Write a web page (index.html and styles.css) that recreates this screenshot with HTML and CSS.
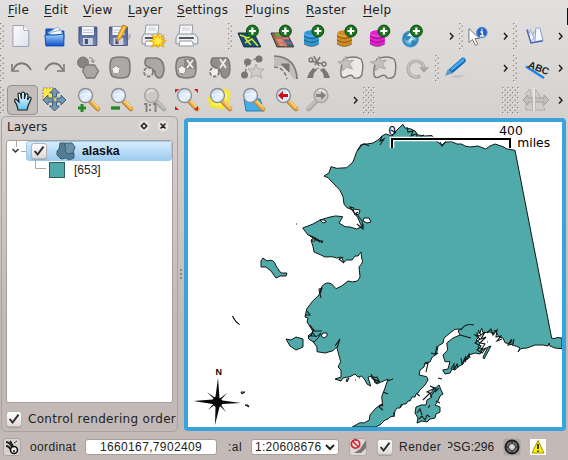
FILE: index.html
```html
<!DOCTYPE html>
<html lang="en">
<head>
<meta charset="utf-8">
<title>Map viewer</title>
<link rel="stylesheet" href="styles.css">
</head>
<body>
<svg class="defs" width="0" height="0">
  <defs>
    <linearGradient id="blue" x2="0" y2="1"><stop stop-color="#a5d3fb"/><stop offset="1" stop-color="#0b50c8"/></linearGradient>
    <linearGradient id="page" x2="1" y2="1"><stop stop-color="#fff"/><stop offset="1" stop-color="#dde1ee"/></linearGradient>
    <linearGradient id="disk" x2="0" y2="1"><stop stop-color="#4d5d92"/><stop offset="1" stop-color="#7786b0"/></linearGradient>
    <linearGradient id="lens" x2="1" y2="1"><stop stop-color="#b5d0ee"/><stop offset=".6" stop-color="#e9f3fd"/><stop offset="1" stop-color="#c4dbf2"/></linearGradient>
    <linearGradient id="hand" x2="0" y2="1"><stop stop-color="#fff"/><stop offset="1" stop-color="#62c6f2"/></linearGradient>
    <radialGradient id="globe"><stop stop-color="#eafaff"/><stop offset=".5" stop-color="#6cc2ea"/><stop offset="1" stop-color="#1673b5"/></radialGradient>
    <pattern id="dots" width="5" height="5" patternUnits="userSpaceOnUse"><rect width="1.3" height="1.3" fill="#8b8784"/><rect x="2.5" y="2.5" width="1.3" height="1.3" fill="#8b8784"/><rect x="1" y="1" width="1" height="1" fill="#f3f1f0"/></pattern>
    <symbol id="plus" viewBox="0 0 14 14"><circle cx="7" cy="7" r="6" fill="#1c7420" stroke="#0e4a12"/><path d="M7 3.500v7M3.500 7h7" stroke="#fff" stroke-width="2.200"/></symbol>
    <symbol id="mag" viewBox="0 0 33 32"><path d="M19.500 17.500l7.500 7.500" stroke="#b98a45" stroke-width="4.600" stroke-linecap="round"/><path d="M20.500 17.500l6.800 6.800" stroke="#f6b645" stroke-width="3.200" stroke-linecap="round"/><path d="M21 17l6 5.800" stroke="#fff0c0"/><circle cx="14.500" cy="11.500" r="7" fill="url(#lens)" stroke="#8c8f91" stroke-width="1.400"/><path d="M9 12q5-4 11-1" fill="none" stroke="#fff" opacity=".8"/></symbol>
    <symbol id="magoff" viewBox="0 0 33 32"><path d="M19.500 17.500l7.500 7.500" stroke="#a9a6a4" stroke-width="4.600" stroke-linecap="round"/><path d="M20.500 17.500l6.500 6.500" stroke="#c1bebc" stroke-width="3" stroke-linecap="round"/><circle cx="14.500" cy="11.500" r="7" fill="#cbc8c6" stroke="#a5a3a1" stroke-width="1.400"/><path d="M10 9q3-4 7-2" fill="none" stroke="#e7e5e3" stroke-width="2"/></symbol>
    <symbol id="printer" viewBox="0 0 33 32"><path d="M10 5h13l-1 10H9z" fill="#f6f7f9" stroke="#9599a2"/><path d="M12 8h8M12 10h8" stroke="#c9ccd3"/><path d="M8 14h17l3 4v6H6v-6z" fill="#ecedf0" stroke="#8d919a"/><path d="M9 18h15" stroke="#55585f" stroke-width="2.200"/><path d="M10 21h12l2 5H9z" fill="#fff" stroke="#9599a2"/></symbol>
    <symbol id="db" viewBox="0 0 33 32"><path d="M6 13v11q7.500 5 15 0V13" fill="currentColor"/><ellipse cx="13.500" cy="13" rx="7.500" ry="3" fill="currentColor" stroke="#fff" stroke-opacity=".3"/><path d="M6 16q7.500 5 15 0M6 20q7.500 5 15 0M6 24q7.500 5 15 0" fill="none" stroke="#000" stroke-opacity=".4" stroke-width="1"/><use href="#plus" x="13" y="4" width="14" height="14"/></symbol>
    <symbol id="floppy" viewBox="0 0 33 32"><path d="M8 7h18v18.500H10L8 23z" fill="url(#disk)" stroke="#46537c"/><path d="M11 7h12v8H11z" fill="#f5f7fa"/><path d="M12 10h10M12 12.500h10" stroke="#bbc4d5"/><path d="M12 18h10v7H12z" fill="#ccd2df"/><path d="M14 19h3v5h-3z" fill="#3f4c78"/></symbol>
    <symbol id="chev" viewBox="0 0 8 32"><path d="M2 13l3 3.300-3 3.200" fill="none" stroke="#222" stroke-width="1.500"/></symbol>
    <symbol id="tick" viewBox="0 0 16 16"><path d="M3 8l3.400 4 6.800-9" fill="none" stroke="#2c2c2c" stroke-width="2.200"/></symbol>
  </defs>
</svg>

<div class="window">
  <nav class="menu">
    <span class="m1"><u>F</u>ile</span><span class="m2"><u>E</u>dit</span><span class="m3"><u>V</u>iew</span><span class="m4"><u>L</u>ayer</span><span class="m5"><u>S</u>ettings</span><span class="m6"><u>P</u>lugins</span><span class="m7"><u>R</u>aster</span><span class="m8"><u>H</u>elp</span>
  </nav>

  <div class="toolbar files">
    <svg class="grip"><rect width="5" height="27" fill="url(#dots)"/></svg>
    <svg class="tool" viewBox="0 0 33 32"><path d="M8 5.500h11l5 5.500v15.500H8z" fill="url(#page)" stroke="#9c9ead"/><path d="M18.500 5.500l.5 5h5" fill="#fff" stroke="#a8abb8"/></svg>
    <svg class="tool" viewBox="0 0 33 32"><path d="M8 9h8l2 2h8v8H8z" fill="#1c5fc8" stroke="#0d4aa8"/><path d="M10 13l10-6 5 7z" fill="#fff" stroke="#8eabcf"/><path d="M14 12l9-2 2 5H11z" fill="#eef6ff" stroke="#8eabcf"/><path d="M7 15l10 0 9-1v12H8z" fill="url(#blue)" stroke="#0c4cba"/></svg>
    <svg class="tool" viewBox="0 0 33 32"><use href="#floppy" width="33" height="32"/></svg>
    <svg class="tool" viewBox="0 0 33 32"><path d="M22 15l6-1v4l-6 5z" fill="#b9b8bc"/><use href="#floppy" x="-1.500" width="33" height="32"/><path d="M20 5l4 1.500-6 12-4 3 .5-5z" fill="#ffb52e" stroke="#c58227"/><path d="M21.500 7l-5 10" stroke="#ffe48a"/></svg>
    <svg class="tool" viewBox="0 0 33 32"><use href="#printer" width="33" height="32"/><path d="M22 13.500l1.600 4.200 4-2.200-2 4.200 4 1.300-4 1.500 2 4.200-4-2.200-1.600 3-1.600-3-4.200 2.200 2-4.200-4.200-1.500 4.200-1.500-2-4 4.200 2z" fill="#ffeb43" stroke="#efad00" stroke-width="1.200"/></svg>
    <svg class="tool" viewBox="0 0 33 32"><use href="#printer" x="1" width="33" height="32"/></svg>
    <svg class="grip g-add"><rect width="5" height="27" fill="url(#dots)"/></svg>
    <svg class="tool" viewBox="0 0 33 32"><path d="M5 13h16l7 14H11z" fill="#164e78" stroke="#172c3c"/><path d="M7 15l8 3 5-3M12 23l7-4 6 7M12 18l6 7" fill="none" stroke="#dbe82b" stroke-width="1.500"/><use href="#plus" x="12.500" y="4" width="14" height="14"/></svg>
    <svg class="tool" viewBox="0 0 33 32"><path d="M5 13h16l7 14H11z" fill="#a15e47" stroke="#3b342d"/><path d="M8 13h5l3 5h-5z" fill="#68a044"/><path d="M15 14h5l3 5h-5z" fill="#e7a0a0"/><path d="M10 19h7l4 7h-7z" fill="#c29a77"/><path d="M18 20h6l3 6h-5z" fill="#26718b"/><path d="M9 18h15M13 13l7 14M11 23h16" stroke="#e35a75"/><use href="#plus" x="12.500" y="4" width="14" height="14"/></svg>
    <svg class="tool sky" viewBox="0 0 33 32"><use href="#db" width="33" height="32"/></svg>
    <svg class="tool ochre" viewBox="0 0 33 32"><use href="#db" width="33" height="32"/></svg>
    <svg class="tool pink" viewBox="0 0 33 32"><use href="#db" width="33" height="32"/></svg>
    <svg class="tool" viewBox="0 0 33 32"><circle cx="13.500" cy="19" r="8.300" fill="url(#globe)" stroke="#75aed0" stroke-width=".6"/><path d="M7 13l6 1 1 4-4 3-3-3zM15 20l5 1-2 5-4-1z" fill="#3a83b5"/><path d="M10 16l4-4 1 4z" fill="#fff"/><use href="#plus" x="12.500" y="4" width="14" height="14"/></svg>
    <svg class="chev c-add"><use href="#chev"/></svg>
    <svg class="grip g-near"><rect width="5" height="27" fill="url(#dots)"/></svg>
    <svg class="tool" viewBox="0 0 33 32"><circle cx="19" cy="12.500" r="5.300" fill="#2563bd" stroke="#5790d7"/><path d="M19 9v1.500M17.500 12h2v4M17 16h4.500" stroke="#fff" stroke-width="1.400" fill="none"/><path d="M6 8.500v14l3.500-3 3 6 2.500-1.200-3-5.800h4.500z" fill="#fff" stroke="#777"/></svg>
    <svg class="chev c-id"><use href="#chev"/></svg>
    <svg class="grip g-near"><rect width="5" height="27" fill="url(#dots)"/></svg>
    <svg class="tool" viewBox="0 0 33 32"><path d="M9 9l4 14 12-2-3-12-4 1-4 6z" fill="#dce7fa" stroke="#8398cf"/><path d="M12 9l4 9-3 4M18 8l4 0 3 12-8 2z" fill="#f7fbff" stroke="#8fa1d6"/><path d="M9 10l4 13 12-2" fill="none" stroke="#4c66b4" stroke-width="1.300"/></svg>
    <svg class="chev c-end"><use href="#chev"/></svg>
  </div>

  <div class="toolbar edits">
    <svg class="grip"><rect width="5" height="27" fill="url(#dots)"/></svg>
    <svg class="tool gray" viewBox="0 0 33 32"><path d="M26 18C21 9 12 9 8 18" fill="none" stroke-width="1.800"/><path d="M7 12v7h7" fill="none" stroke-width="1.600"/></svg>
    <svg class="tool gray" viewBox="0 0 33 32"><path d="M7 18C12 9 20 9 25 18" fill="none" stroke-width="1.800"/><path d="M26 12v7h-7" fill="none" stroke-width="1.600"/></svg>
    <svg class="tool gray" viewBox="0 0 33 32"><circle cx="12" cy="10.500" r="5.500" fill="#878583"/><path d="M14.500 13h9l4 6-4 7h-8l-4-7z" fill="#aaa7a5" stroke-width="1.300"/><path d="M18 6q4-1 4 4m-2-1.500l2 2 2-2" fill="none"/></svg>
    <svg class="tool gray" viewBox="0 0 33 32"><path d="M9 6q7-2 14 0 3 1 3 9 0 9-3 10-7 2-13 0-4-1-4-10 0-8 3-9z" fill="#aba8a6" stroke-width="1.600"/><circle cx="12" cy="18" r="3.800" fill="#f1f0ef" stroke-dasharray="3 1.500"/></svg>
    <svg class="tool gray" viewBox="0 0 33 32"><path d="M10 6h10q7 2 7 12-1 8-5 8-4-1-4-6-1-3-5-4-5-2-5-5 0-4 2-5z" fill="#aba8a6" stroke-width="1.600"/><circle cx="11.500" cy="20" r="4.500" fill="#dedbd9" stroke-width="1.800" stroke-dasharray="3.500 1.500"/></svg>
    <svg class="tool gray" viewBox="0 0 33 32"><path d="M9 6q7-2 14 0 3 1 3 9 0 9-3 10-7 2-13 0-4-1-4-10 0-8 3-9z" fill="#aba8a6" stroke-width="1.600"/><path d="M14 7h11v10H14z" fill="#898684" stroke="none"/><circle cx="12" cy="18" r="3.800" fill="#f1f0ef" stroke-dasharray="3 1.500"/><path class="white" d="M17 8l6 8m0-8l-6 8"/></svg>
    <svg class="tool gray" viewBox="0 0 33 32"><path d="M10 6h14q3 2 3 12-1 8-5 8-4-1-4-6-1-3-5-4-5-2-5-5 0-4 2-5z" fill="#918e8c" stroke-width="1.500"/><circle cx="11.500" cy="20" r="4.500" fill="#f0eeed" stroke-width="1.800" stroke-dasharray="3.500 1.500"/><path class="white" d="M17 7l6 9m0-9l-6 9"/></svg>
    <svg class="tool gray" viewBox="0 0 33 32"><path d="M11 10l11-4M11 10L9 23" stroke-width="1.300" stroke-dasharray="5 2"/><circle cx="11.500" cy="10" r="3.500" fill="#777" stroke="none"/><circle cx="23" cy="7" r="3.500" fill="#777" stroke="none"/><circle cx="8.500" cy="23" r="3.500" fill="#777" stroke="none"/><path d="M20 12l2 5 6 0-4 4 2 5-6-3-5 3 1-5-4-4h6z" fill="#cfccca" stroke="#aeaba9"/></svg>
    <svg class="tool gray" viewBox="0 0 33 32"><path d="M5 4q23 0 24 23h-5l-5-8-7-5H5z" fill="#c1bebc" stroke="none"/><path d="M5 4q22 1 23 23" fill="none" stroke-width="1.600"/><path d="M5 15q10 0 13 12" fill="none" stroke-width="1.600" stroke-dasharray="4 2"/><path d="M12 12h8v8z" fill="#777"/></svg>
    <svg class="tool gray" viewBox="0 0 33 32"><path d="M9 22q7-11 15 0" fill="none" stroke-dasharray="4 2"/><path d="M12 4l5 10M18 5l-5 8M9 9l12 3" fill="none" stroke-width="1.600"/><circle cx="9" cy="8" r="2" fill="none" stroke-width="1.400"/><circle cx="22" cy="12" r="2" fill="none" stroke-width="1.400"/><path d="M11 16l4 2-3 3-1 5H5l2-5zM22 16l-4 2 3 3 1 5h6l-2-5z" fill="#777" stroke="none"/></svg>
    <svg class="tool gray" viewBox="0 0 33 32"><path d="M9 7q10-4 17 0 3 5 1 15-1 5-8 4-2-5-8-1-4 2-5-2-1-8 3-16z" fill="#eceae9" stroke-width="1.400"/><path d="M11 4l1.500 5 6-1-4 4 3 5-6-2-4 4v-6l-5-3 6-1z" fill="#c3c0be" stroke="#aaa7a5"/></svg>
    <svg class="tool gray" viewBox="0 0 33 32"><path d="M9 7q10-4 17 0 3 5 1 15-1 5-8 4-2-5-8-1-4 2-5-2-1-8 3-16z" fill="#dedbd9" stroke-width="1.400"/><path d="M11 4l1.500 5 6-1-4 4 3 5-6-2-4 4v-6l-5-3 6-1z" fill="#c3c0be" stroke="#aaa7a5"/></svg>
    <svg class="tool" viewBox="0 0 33 32"><path d="M19 24a8 8 0 1 1 4-8" fill="none" stroke="#a9a6a4" stroke-width="3.200"/><path d="M18 15h10l-5 6z" fill="#a9a6a4"/><path d="M17 24.500a8 8 0 1 1 6-9" fill="none" stroke="#cbc8c6" stroke-width="1.400"/></svg>
    <svg class="grip g-pen"><rect width="5" height="27" fill="url(#dots)"/></svg>
    <svg class="tool" viewBox="0 0 33 32"><path d="M10 24l16-1-8 3z" fill="#c1bebc"/><path d="M11.500 18.500L23 8.500" stroke="#126cb5" stroke-width="5.500" stroke-linecap="round"/><path d="M12 17L23 8" stroke="#48a9eb" stroke-width="2.800" stroke-linecap="round"/><path d="M8 17l5 4-8 3z" fill="#5d9cc9"/></svg>
    <svg class="chev c-pen"><use href="#chev"/></svg>
    <svg class="grip g-near"><rect width="5" height="27" fill="url(#dots)"/></svg>
    <svg class="tool" viewBox="0 0 33 32"><path d="M7 14.500L25 26" stroke="#1682ee" stroke-width="2.200"/><text class="abc" x="8.500" y="15" transform="rotate(22 8 15)">ABC</text></svg>
    <svg class="chev c-end"><use href="#chev"/></svg>
  </div>

  <div class="toolbar views">
    <svg class="grip"><rect width="5" height="27" fill="url(#dots)"/></svg>
    <span class="pressed"><svg width="30" height="30" viewBox="0 0 30 30"><path d="M10 24q-1-6-3-8-1-3 1-3l3 3-1-8q1-2 2.500 0l1 5V7q1.500-2 3 0v6l1-5q2-1 2.500 1l-.5 5 2-3q2 0 1.500 2l-3 7-1 4z" fill="url(#hand)" stroke="#17222c" stroke-width="1.200"/></svg></span>
    <svg class="tool" viewBox="0 0 33 32"><path d="M5 4h12v12H5z" fill="#ffe94a" stroke="#7b702a" stroke-dasharray="1.500 1.500"/><path d="M16.500 4l5 5h-3v4h-4V9h-3zM16.500 27l5-5h-3v-4h-4v4h-3zM5 16l5-5v3h5v4h-5v3zM28 16l-5-5v3h-4v4h4v3z" fill="#7897ae" stroke="#40627a"/></svg>
    <svg class="tool" viewBox="0 0 33 32"><use href="#mag" width="33" height="32"/><path d="M11 20v8M7 24h8" stroke="#238b26" stroke-width="3"/></svg>
    <svg class="tool" viewBox="0 0 33 32"><use href="#mag" width="33" height="32"/><path d="M7 24h9" stroke="#238b26" stroke-width="3.400"/></svg>
    <svg class="tool" viewBox="0 0 33 32"><use href="#magoff" width="33" height="32"/><path d="M7 20h2.500v8M16 20h2.500v8M13 20v2m0 3v2" stroke="#858381" stroke-width="2" fill="none"/></svg>
    <svg class="tool" viewBox="0 0 33 32"><use href="#mag" width="33" height="32"/><path d="M5 5h4l-4 4zM28 5h-4l4 4zM5 26h4l-4-4zM28 26h-4l4-4z" fill="#d51822"/></svg>
    <svg class="tool" viewBox="0 0 33 32"><path d="M12 9l10-3 4 3-1 10-6 5-11-2-2-8z" fill="#fff45a" stroke="#f2e53d" stroke-width="3"/><use href="#mag" width="33" height="32"/></svg>
    <svg class="tool" viewBox="0 0 33 32"><path d="M8 15h16l4 12H10z" fill="#42aee9" stroke="#2880b7"/><use href="#mag" width="33" height="32"/></svg>
    <svg class="tool" viewBox="0 0 33 32"><use href="#mag" width="33" height="32"/><path d="M9 11.500l5-4.500v3h5v3h-5v3z" fill="#d20b16"/></svg>
    <svg class="tool" viewBox="0 0 33 32"><g transform="translate(33.500 0) scale(-1 1)"><use href="#magoff" width="33" height="32"/></g><path d="M24 11.500L19 7v3h-5v3h5v3z" fill="#858381"/></svg>
    <svg class="chev c-view"><use href="#chev"/></svg>
    <svg class="grip wide"><rect width="12" height="27" fill="url(#dots)"/></svg>
    <svg class="grip wider"><rect width="17" height="27" fill="url(#dots)"/></svg>
    <svg class="tool" viewBox="0 0 33 32"><path d="M7 26V9l4-4 3 21zM16 26V5l4 5 6 16z" fill="#d0cdcb" stroke="#b0adab"/><path d="M4 16l5-5v3h16v-3l5 5-5 5v-3H9v3z" fill="#c3c0be" stroke="#a3a09e"/><path d="M15 4v23" stroke="#e6e4e2" stroke-width="2"/></svg>
    <svg class="chev c-end"><use href="#chev"/></svg>
  </div>

  <main class="work">
    <section class="dock">
      <header class="dock-head"><span class="dock-title">Layers</span>
        <svg width="44" height="14" viewBox="0 0 44 14"><circle cx="13" cy="6" r="5.500" fill="#e6e3e1"/><circle cx="32" cy="6" r="5.500" fill="#e6e3e1"/><path d="M13 3.200L15.800 6 13 8.800 10.200 6zM29.500 3.500l5 5m0-5l-5 5" fill="none" stroke="#222" stroke-width="1.500"/></svg>
      </header>
      <div class="tree">
        <div class="row">
          <svg class="branch" width="19" height="21"><path d="M9.500 0v6M14 10.500h6" stroke="#aaa"/><path d="M5.500 8l3 3 3-3" fill="none" stroke="#333" stroke-width="1.500"/></svg>
          <div class="selected"><svg class="box" viewBox="0 0 16 16"><use href="#tick"/></svg>
            <svg class="layer-icon" width="20" height="19" viewBox="0 0 20 19"><path d="M4 1h6l3 3v6l5 1v5l-5 2-3-2-5 1-4-4V9l2-2z" fill="#547b94" stroke="#395e77"/><path d="M11 1l5 0 3 4-2 6-5 1-3-3 1-3-2-3z" fill="#6b92aa" stroke="#395e77"/></svg>
            <b>alaska</b></div>
        </div>
        <div class="row child"><svg width="12" height="20"><path d="M.5 0v8.500H11" fill="none" stroke="#aaa"/></svg><i class="swatch"></i><span>[653]</span></div>
      </div>
      <div class="order"><svg class="box" viewBox="0 0 16 16"><use href="#tick"/></svg><span>Control rendering order</span></div>
    </section>
    <div class="splitter"><i></i><i></i><i></i></div>
    <section class="map">
      <svg width="374" height="305" viewBox="188 122 374 305">
        <g class="land">
          <path d="M515 150.300L551.700 338.300 555 338.500 557 337.500 562 338V348.700L555 348 550 346 549 343 548 346 543 345 535 345 527 348 521 348.500 518 352 520 348 516 346 512 345 511.700 339 510 344 505 342.700 503 338 499 337 495 330 493 334 490 332 483 332.700 481.700 328.300 480 333 476.700 333 479 337 476 340 480 343 478 347 483 349 480 354 475 353 469 355 468 359 465 360 463 364 458 366.700 455 370 452 369 450 373 445 374 442.700 370 448 369 450 361.700 445 361.700 443 355 447.700 350 446.700 343 453 338 460 335 458 331 461 329 455 329.300 450 333 444 338 443 343 438 346 436.700 353 431.700 358 430 362 425 362.700 424 367 420 370 419 375 426.700 376.700 428 380 425 385 420 390 418 393 416 394 415 397 412 397 410 401 408 401 406 404 403 404 400 408 397 408 395 411 394 416 390 417 388 419 385 420 383 422 380 425 375 427H352.300L360 422.700 364 423 369.300 420 370 415 375 409 380 405 382.700 406 381.700 396.700 385 388 388 379 376.700 384 374 380 380 381.700 375 383 373 376 368 377 370.700 386 367 384 365 380 361.700 376 358 377 355 374 350 376.700 343 378 341 381 335 379 341 377 341 370 338 367 340.700 361.700 338 351.700 336.700 347 333 350.700 325 353 317 351.700 317 347 313 341.700 308 336 313 331.700 309 325 307 322 308 318 305 317 306.700 309 313 300.700 319 295 321.700 286.700Q326 281 331.700 284L336 288.700 341.700 286 348 281Q358 284 360 276.700L359 266.700Q364 263 361.700 258L361 252 358 256 355 256 352 260 346.700 260 344 262 341 257 336.700 258 332 256.700 325 257 321 255 314 252 313 246.700 311 240 315 238 323 242.700 313 236.700 308 235 302.700 228 313 224 320 220 330 217Q335 215 342.700 216.700L339 223 345 226.700 350 227 356.700 229 361.700 226.700 358 218 352.700 210 346.700 207.500 344 204 343 196.700Q341 190 335 185L328 177.700 324 176 329 173 331 166.700 336.700 168.300 346.700 167.700 353 162 356.700 151.700 362.700 144 367 144 373 143 378 140 382 136 386 134 392 136 397 130 403 124.300 405 128 411 129 415 131 418 135 425 136 432 135.500 435 140 441.700 145 446 142 451.700 141.700 457 144 461.700 144 465 146 470 147 478 146 485.700 149 490 146 495 144 503 146.700 507 149z"/>
          <path d="M261 261l2-3 4 3q7-3 9 5l5 7 6 0-1 3-6 0-4 2-5-7-5-4-5 0zM286 339l5 1 5-3 7 2v8l-7 3-6-4-4-7zM308 338l5-5 3 4 5-4-2 4-5 5-4-2zM232.500 316l2 4 5 4.500-3-2zM241 392h4l-3 2zM245 405l3 0 1 2z"/>
          <path d="M439 385l-5 4-4 5 2 3-5 3-1 5-5 0-5 2-1 6 3 5-1 5 5-2 5 1 3-3 5-1 1-4 4-2 0-5-5-2 3-4 2-5 3-2-2-4z"/>
          <path d="M488 347l3-1-7 13-1-2zM346 380l3-2-2 4z"/>
        </g>
        <g class="water">
          <path d="M364 218l5 0 2 4-4 1-4-2zM353 209l7 1-1 4-4 1zM320 220l5 0 1 2-3 1zM312 239l3 0 0 2-3 0zM323 333l4 0 0 3-3 2-3-2z"/>
          <path d="M356 213l6 8 1 6" fill="none"/>
        </g>
        <g class="crags">
          <path d="M382 136l-2 5 4-2-4 6M407 127l1 5 5-1-2 5 5-2 2 4 6-3M391 130l5 3M440 142l2 4 4-5M357 151l4-6 4-1 4 2M461 330q4-7 13-5M460 335l11 3M310 325l4 6 8 0M314 329l-3 7 5 0M320 294l2-6-3 1 2 9M305 315l5 0-3-4M337 348l3-9-5 7M310 236l10 6M343 257l-4 2 5 4M322 240l0 3M354 208l-4-1 5 7 3-2M357 224l6 5 0-5M371 378l6-1 2 4-6-2-2-5M387 381l6-2M383 392l5 2M382 404l-3 3 4 3M437 346l-2 9 3-2M431 353l4 1M425 364l3-1-2 9"/>
          <path d="M478 330l3 5 4-3-4 7 5-2-6 6 5 1-4 6 5-2-4 5-5-3 4-4-6-3 5-4-5-4 6 1M487 333l4-4 2 6 4-5-1 7 5-1-4 5 5-2M511 340l-3 5 5-1 1-5M417 413l3-4 2 6M428 408l2-3M423 400l7-7-3-1 8-4-5-2 6 3-6 8M435 392l4-4M419 419l3-3 3 4 2-5 3 2M436 401l4 2M420 396l-3-2M402 404l-2 3M394 412l0 5M461 358l1 6 4-8-1 6 4-8 1 4M451 369l3-5 0 6 3-6 1 4M487 342h1M426 370h1M438 378l4 1M296 224h1M355 380h1M359 378h1"/>
        </g>
        <g class="scale"><path class="halo" d="M392 148v-9h118v9"/><path d="M392 148v-9h118v9"/><text x="388.200" y="134.800">0</text><text x="499.300" y="134.800">400</text><text x="517.300" y="146.800">miles</text></g>
        <g class="compass"><path d="M218 378l1.500 20 3 2.500 18.500 2.500-18.500 1-3 3L215 425l.5-18-3-3-19-3 19-1.500 3-3z"/><path d="M207 392l9 9-8 9 9-7 9 9-7-10 8-9-9 7z"/><circle cx="217" cy="402" r="3.300"/><text x="215.500" y="375">N</text></g>
      </svg>
    </section>
  </main>

  <footer class="status">
    <svg class="mouse" width="18" height="18" viewBox="0 0 18 18"><rect x=".5" y=".5" width="17" height="17" rx="3" fill="#d9d4d2" stroke="#aaa29f"/><path d="M3 4q4 0 7 7M3 8q3 0 5 4M7 3l3 5" fill="none" stroke="#222" stroke-width="1.800"/><path d="M11 5l3-2" stroke="#333"/><circle cx="11" cy="12" r="3.500" fill="#eee" stroke="#111" stroke-width="1.600"/><circle cx="11" cy="13" r="1" fill="#111"/></svg>
    <span class="coord">oordinat</span>
    <span class="field">1660167,7902409</span>
    <span class="cal">:al</span>
    <span class="field combo">1:20608676<svg width="10" height="8"><path d="M1 2l4 4 4-4" fill="none" stroke="#222" stroke-width="2"/></svg></span>
    <svg class="stop" width="18" height="18" viewBox="0 0 18 18"><rect x=".5" y=".5" width="17" height="17" rx="3" fill="#ddd8d6" stroke="#b1aaa7"/><path d="M17 2l-6 9-6 4 7 0 5-5z" fill="#777"/><circle cx="6.500" cy="6" r="4.200" fill="#f5dddd" stroke="#ce272e" stroke-width="1.700"/><path d="M3.500 3l6 6" stroke="#ce272e" stroke-width="1.600"/></svg>
    <svg class="box" viewBox="0 0 16 16"><use href="#tick"/></svg>
    <span class="render">Render</span>
    <span class="epsg"><span>PSG:296</span></span>
    <svg class="crs" width="18" height="18" viewBox="0 0 18 18"><rect x=".5" y=".5" width="17" height="17" rx="3" fill="#aaa5a2"/><circle cx="9" cy="9" r="6.500" fill="#777" stroke="#222" stroke-width="2"/><path d="M9 2v14M2 9h14" stroke="#222"/><circle cx="9" cy="9" r="3.500" fill="#bbb" stroke="#333"/><path d="M9 6v6M6 9h6" stroke="#eee"/></svg>
    <svg class="warn" width="16" height="16" viewBox="0 0 16 16"><path d="M0 0h16v16H0z" fill="#fff"/><path d="M8 1.500l6 12.500H2z" fill="#fff100" stroke="#9b9300"/><path d="M8 5v5m0 1.500v1.500" stroke="#111" stroke-width="1.600"/></svg>
  </footer>
  <i class="edge"></i>
</div>
</body>
</html>
```
FILE: styles.css
```css
* { box-sizing: border-box; }
body { margin: 0; }
.defs { position: absolute; }
svg { display: block; flex: none; }
.window { position: relative; width: 568px; height: 460px; overflow: hidden; display: flex; flex-direction: column; background: linear-gradient(#e2e0df, #d5d1ce 115px, #c3bab7 320px, #c3bab7); font-family: "DejaVu Sans", sans-serif; font-size: 12px; color: #222; }
.menu { height: 20px; display: flex; padding-left: 8px; line-height: 20px; white-space: nowrap; letter-spacing: .25px; }
.menu span { flex: none; }
.menu u { text-underline-offset: 2px; }
.m1 { width: 36px; } .m2 { width: 39px; } .m3 { width: 45px; } .m4 { width: 49px; } .m5 { width: 68px; } .m6 { width: 61px; } .m7 { width: 57px; }
.toolbar { height: 32px; display: flex; align-items: center; }
.tool { width: 33px; height: 32px; }
.grip { width: 5px; height: 27px; }
.files .tool { width: 32.8px; }
.files .g-add { margin-left: 26px; }
.chev { width: 8px; height: 32px; }
.c-add { margin-left: 18px; }
.g-near { margin-left: 3px; }
.files .g-near + .tool { margin-left: -1px; }
.files .c-id { margin-left: 7px; }
.toolbar .c-end { margin-left: auto; margin-right: 3px; }
.files .g-near:nth-last-child(3) + .tool { margin-left: 0; }
.edits .g-pen { margin-left: 1px; }
.c-pen { margin-left: 29px; }
.edits .g-near + .tool { margin-left: 1px; }
.views .c-view { margin-left: 17px; }
.wide { width: 12px; margin-left: 3px; }
.wider { width: 17px; margin-left: 127px; }
.gray { stroke: #7b7977; }
.white { stroke: #eee; stroke-width: 1.8; }
.sky { color: #3297d3; } .ochre { color: #d28d21; } .pink { color: #e51ed0; }
.abc { font: bold 10px "Liberation Sans", sans-serif; fill: #222; }
.pressed { width: 31px; height: 30px; margin: 0 0 0 2px; border: 1px solid #99938f; border-radius: 4px; background: #c3beba; }
.work { height: 316px; display: flex; padding: 0 2px 0 1px; }
.dock { width: 177px; height: 316px; border: 1px solid #aaa29f; border-radius: 5px; padding: 0 4px; }
.dock-head { height: 23px; display: flex; align-items: center; justify-content: space-between; padding: 0 0 4px 1px; }
.dock-title { font-size: 12px; letter-spacing: .1px; }
.dock-head svg { margin-right: -2px; }
.tree { height: 263px; background: #fff; border: 1px solid #a9a19e; border-radius: 3px; }
.row { display: flex; height: 20px; }
.selected { flex: 1; display: flex; align-items: center; border: 1px solid #a1cbed; border-radius: 3px; background: linear-gradient(#d6ecfd, #9dccf0); padding-left: 4px; }
.box { width: 16px; height: 16px; background: linear-gradient(#fff, #ddd9d6); border: 1px solid #bbb4b0; border-radius: 3px; box-shadow: 0 1px 1px #8888; }
.layer-icon { margin-left: 9px; }
.selected b { margin-left: 6px; font: bold 12.3px "Liberation Sans", sans-serif; color: #111; }
.row.child { align-items: center; height: 18px; padding-left: 28px; font: 12px "Liberation Sans", sans-serif; }
.swatch { width: 16px; height: 16px; margin: 0 9px 0 2px; background: #50aaa9; border: 1px solid #29605e; }
.order { display: flex; align-items: center; height: 31px; gap: 6px; white-space: nowrap; letter-spacing: .3px; }
.splitter { width: 5px; display: flex; flex-direction: column; justify-content: center; align-items: center; gap: 2px; margin-right: 1px; }
.splitter i { width: 2px; height: 2px; background: #8e8683; }
.map { width: 382px; height: 313px; margin-top: 2px; border: 4px solid #39a3dc; border-radius: 4px; background: #fff; }
.land { fill: #50aaa9; stroke: #101818; stroke-width: 1; }
.water { fill: #fff; stroke: #101818; stroke-width: 1; }
.crags { fill: none; stroke: #101818; stroke-width: 1.1; }
.scale { fill: none; stroke: #000; stroke-width: 2; }
.scale .halo { stroke: #fff; stroke-width: 4.5; }
.scale text { fill: #000; stroke: none; font-size: 12.3px; }
.compass { fill: #080808; }
.compass text { font: bold 9px "Liberation Sans", sans-serif; }
.status { height: 30px; display: flex; align-items: center; padding: 2px 0 0 3px; white-space: nowrap; font-family: "Liberation Sans", sans-serif; letter-spacing: .5px; }
.status > * { flex: none; }
.coord { width: 47px; margin-left: 9px; letter-spacing: .35px; }
.field { width: 132px; height: 16px; margin-left: 8px; text-align: center; line-height: 15px; background: #fff; border: 1px solid #a59d9a; border-radius: 3px; letter-spacing: .35px; }
.cal { width: 15px; margin-left: 11px; }
.combo { width: 88px; display: flex; align-items: center; justify-content: space-between; padding: 0 3px 0 3px; letter-spacing: .3px; }
.stop { margin-left: 10px; }
.status .box { margin-left: 10px; }
.render { width: 43px; margin-left: 6px; }
.epsg { width: 46px; margin-left: 6px; overflow: hidden; }
.epsg span { display: block; margin-left: -3px; letter-spacing: .1px; }
.crs { margin-left: 9px; }
.warn { margin-left: 9px; }
.edge { position: absolute; right: 0; top: 8px; width: 1px; height: 17px; background: #111; }
```
